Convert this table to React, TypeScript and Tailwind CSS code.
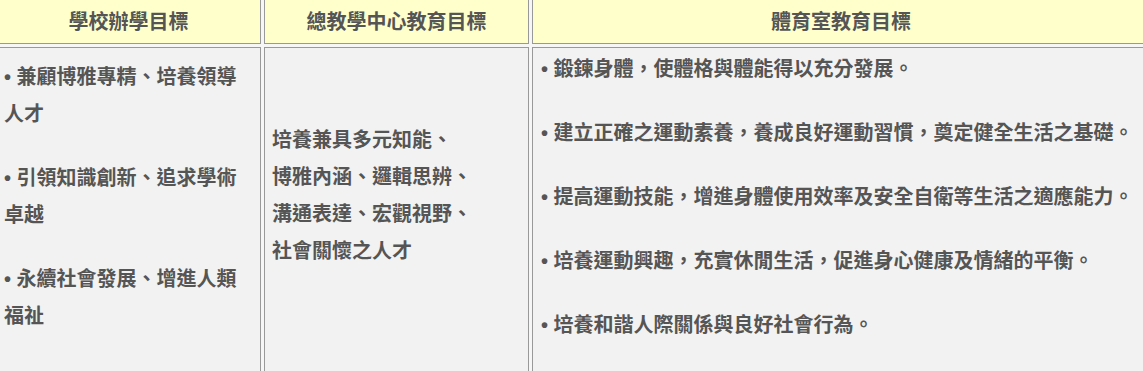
import { FC } from 'react';

const schoolGoals = [
  '兼顧博雅專精、培養領導人才',
  '引領知識創新、追求學術卓越',
  '永續社會發展、增進人類福祉',
];

const centerGoals = [
  '培養兼具多元知能、',
  '博雅內涵、邏輯思辨、',
  '溝通表達、宏觀視野、',
  '社會關懷之人才',
];

const peGoals = [
  '鍛鍊身體，使體格與體能得以充分發展。',
  '建立正確之運動素養，養成良好運動習慣，奠定健全生活之基礎。',
  '提高運動技能，增進身體使用效率及安全自衛等生活之適應能力。',
  '培養運動興趣，充實休閒生活，促進身心健康及情緒的平衡。',
  '培養和諧人際關係與良好社會行為。',
];

// bullet drawn by Liberation Sans, CJK falls through to Noto
const Bullet: FC<{ text: string }> = ({ text }) => (
  <p className="mb-[27px] leading-[37px] font-['Liberation_Sans','Noto_Sans_CJK_TC','Noto_Sans_CJK_SC',sans-serif]">
    {'• ' + text}
  </p>
);

const App: FC = () => {
  return (
    <div className="w-[1143px] h-[371px] overflow-hidden bg-[#f6f6f6]">
      <table
        className="-ml-[7px] -mt-[5px] w-[1170px] table-fixed border-separate border-spacing-[3px] text-[20px] font-bold text-[#555555] font-['Noto_Sans_CJK_TC','Noto_Sans_CJK_SC',sans-serif]"
      >
        <thead>
          <tr>
            <th className="w-[265px] h-[46px] border border-[#999999] bg-[#ffffcc] text-center align-middle font-bold">
              學校辦學目標
            </th>
            <th className="w-[265px] h-[46px] border border-[#999999] bg-[#ffffcc] text-center align-middle font-bold">
              總教學中心教育目標
            </th>
            <th className="h-[46px] border border-[#999999] bg-[#ffffcc] text-center align-middle font-bold pr-[10px]">
              體育室教育目標
            </th>
          </tr>
        </thead>
        <tbody>
          <tr>
            {/* 學校辦學目標 */}
            <td className="border border-[#999999] bg-[#f2f2f2] align-top pt-[11px] pl-[7px] pr-[6px]">
              {schoolGoals.map((g) => (
                <Bullet key={g} text={g} />
              ))}
            </td>

            {/* 總教學中心 */}
            <td className="border border-[#999999] bg-[#f2f2f2] align-top pt-[72px] pl-[7px] leading-[37px]">
              {centerGoals.map((line) => (
                <div key={line}>{line}</div>
              ))}
            </td>

            {/* 體育室 */}
            <td className="border border-[#999999] bg-[#f2f2f2] align-top pt-[3px] pl-[8px] pb-[20px] whitespace-nowrap">
              {peGoals.map((g) => (
                <Bullet key={g} text={g} />
              ))}
            </td>
          </tr>
        </tbody>
      </table>
    </div>
  );
};

export default App;
